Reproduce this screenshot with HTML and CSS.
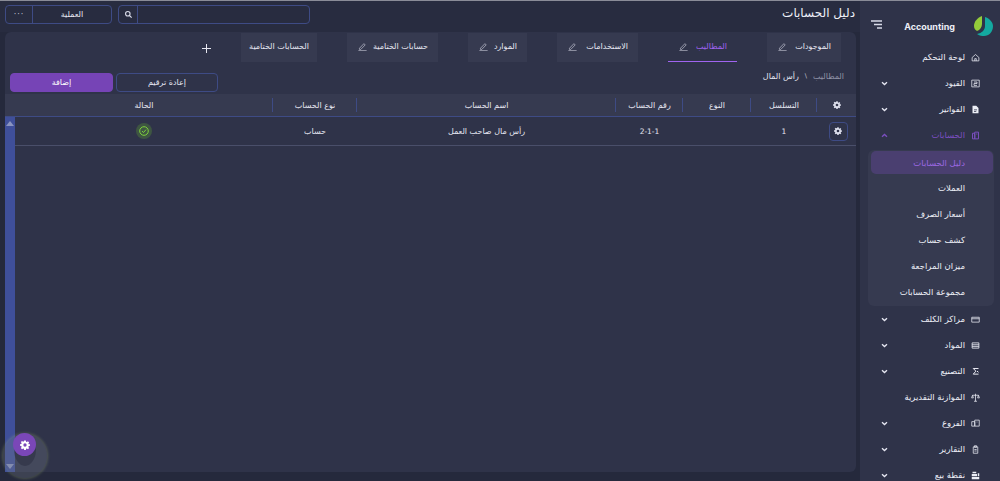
FILE: index.html
```html
<!DOCTYPE html>
<html lang="ar" dir="rtl">
<head>
<meta charset="utf-8">
<title>دليل الحسابات</title>
<link rel="stylesheet" href="styles.css">
</head>
<body>
<svg class="defs" width="0" height="0" aria-hidden="true">
  <symbol id="gear" viewBox="0 0 24 24"><path fill="currentColor" fill-rule="evenodd" d="M10 1h4l.6 3.1 1.9.8 2.6-1.800 2.800 2.800-1.800 2.600.8 1.900L24 10v4l-3.100.6-.8 1.900 1.800 2.600-2.800 2.800-2.600-1.800-1.900.8L14 24h-4l-.6-3.100-1.900-.8-2.600 1.800-2.800-2.800 1.800-2.600-.8-1.900L0 14v-4l3.100-.6.8-1.900-1.800-2.600 2.800-2.800 2.600 1.800 1.900-.8zM12 8a4 4 0 1 0 0 8 4 4 0 0 0 0-8z"/></symbol>
  <symbol id="pen" viewBox="0 0 12 12"><path fill="none" stroke="currentColor" stroke-width=".9" d="M2 8.300 7.900 2.200l1.700 1.700-5.900 6H2zM.5 11.500h11"/></symbol>
  <symbol id="chev" viewBox="0 0 8 6"><path fill="none" stroke="currentColor" stroke-width="1.600" d="M1 1.500 4 4.300l3-2.800"/></symbol>
</svg>
<div class="app">
  <aside class="side">
    <div class="brand">
      <svg class="logo" width="20" height="20" viewBox="0 0 20 20"><path fill="#94cc3a" d="M8 0C3 2 0 6 0 10c0 2 1 4 3 5 3-1 5-4 5-7z"/><path fill="#14a9a0" d="M11 1v9c0 4-3 7-8 8 3 2 5 2 7 2 5 0 9-4 9-10 0-4-4-8-8-9z"/></svg>
      <span class="brand-name">Accounting</span>
      <svg class="burger" width="11" height="9" viewBox="0 0 11 9"><path stroke="#d8dae8" stroke-width="1.400" d="M0 1h11M3 4.500h8M6 8h5"/></svg>
    </div>
    <nav class="nav">
      <div class="item"><svg class="ic" viewBox="0 0 12 12"><path fill="none" stroke="currentColor" d="M1.500 6 6 2l4.500 4v4.500h-9zM5 10.500V7.500h2v3"/></svg><span>لوحة التحكم</span></div>
      <div class="item"><svg class="ic" viewBox="0 0 12 12"><path fill="none" stroke="currentColor" d="M1 1.500h10v9H1zM4 4h4v2H4v2.500h4"/></svg><span>القيود</span><svg class="chev"><use href="#chev"/></svg></div>
      <div class="item"><svg class="ic" viewBox="0 0 12 12"><path fill="currentColor" d="M2 1h5l3 3v7H2zm2 5v1h4V6zm0 2v1h3V8z"/></svg><span>الفواتير</span><svg class="chev"><use href="#chev"/></svg></div>
      <div class="item open"><svg class="ic" viewBox="0 0 12 12"><path fill="none" stroke="currentColor" stroke-width="1.300" d="M2 3h3v7.500H2zM5 1.500h5v9H5zM7 4h1.500"/></svg><span>الحسابات</span><svg class="chev up"><use href="#chev"/></svg></div>
      <div class="sub">
        <a class="sub-item active">دليل الحسابات</a>
        <a class="sub-item">العملات</a>
        <a class="sub-item">أسعار الصرف</a>
        <a class="sub-item">كشف حساب</a>
        <a class="sub-item">ميزان المراجعة</a>
        <a class="sub-item">مجموعة الحسابات</a>
      </div>
      <div class="item"><svg class="ic" viewBox="0 0 12 12"><path fill="none" stroke="currentColor" d="M1 3h10v6.500H1zM1 5h10"/></svg><span>مراكز الكلف</span><svg class="chev"><use href="#chev"/></svg></div>
      <div class="item"><svg class="ic" viewBox="0 0 12 12"><path fill="none" stroke="currentColor" stroke-width="1.100" d="M1.500 2.500h9v7h-9zM1.500 5h9M1.500 7.200h9"/></svg><span>المواد</span><svg class="chev"><use href="#chev"/></svg></div>
      <div class="item"><svg class="ic" viewBox="0 0 12 12"><path fill="none" stroke="currentColor" stroke-width="1.300" d="M10 2H3l3.500 3.500L3 9.500h7M8 5.500 10 7"/></svg><span>التصنيع</span><svg class="chev"><use href="#chev"/></svg></div>
      <div class="item"><svg class="ic" viewBox="0 0 12 12"><path fill="none" stroke="currentColor" d="M6 1v10M4 11h4M2 3h8M2 3 .8 6.500h2.400zM10 3 8.800 6.500h2.400z"/></svg><span>الموازنة التقديرية</span></div>
      <div class="item"><svg class="ic" viewBox="0 0 12 12"><path fill="none" stroke="currentColor" d="M1 3.500h4v6H1zM5 1.500h6v8H5zM7.500 4h1"/></svg><span>الفروع</span><svg class="chev"><use href="#chev"/></svg></div>
      <div class="item"><svg class="ic" viewBox="0 0 12 12"><path fill="none" stroke="currentColor" d="M3 2.500h6v8.500H3zM4.500 1h3v2h-3zM4.500 6h3M4.500 8h3"/></svg><span>التقارير</span><svg class="chev"><use href="#chev"/></svg></div>
      <div class="item"><svg class="ic" viewBox="0 0 12 12"><path fill="currentColor" d="M2 1h5v2H2zM1 4h7v3H1zM1 8h10v3H1zM9 3h2v4H9z"/></svg><span>نقطة بيع</span><svg class="chev"><use href="#chev"/></svg></div>
    </nav>
  </aside>

  <main class="main">
    <header class="top">
      <h1 class="title">دليل الحسابات</h1>
      <div class="top-tools">
        <div class="field search">
          <span class="field-text"></span>
          <span class="field-cap"><svg width="7" height="7" viewBox="0 0 10 10"><path fill="none" stroke="#d8dae8" stroke-width="1.600" d="M4 .8a3.200 3.200 0 1 0 0 6.400A3.200 3.200 0 0 0 4 .8zM6.400 6.400 9.500 9.500"/></svg></span>
        </div>
        <div class="field pick">
          <span class="field-text">العملية</span>
          <span class="field-cap dots">···</span>
        </div>
      </div>
    </header>

    <section class="card">
      <div class="tabs">
        <div class="tab">الموجودات<svg class="pen"><use href="#pen"/></svg></div>
        <div class="tab active">المطاليب<svg class="pen"><use href="#pen"/></svg></div>
        <div class="tab">الاستخدامات<svg class="pen"><use href="#pen"/></svg></div>
        <div class="tab">الموارد<svg class="pen"><use href="#pen"/></svg></div>
        <div class="tab">حسابات الختامية<svg class="pen"><use href="#pen"/></svg></div>
        <div class="tab">الحسابات الختامية</div>
        <svg class="plus" width="9" height="9" viewBox="0 0 9 9"><path stroke="#e6e7f0" d="M4.500 0v9M0 4.500h9"/></svg>
      </div>

      <div class="bar">
        <div class="crumbs"><span class="crumb-dim">المطاليب</span><span class="sep">\</span><span>رأس المال</span></div>
        <div class="actions">
          <button class="btn">إعادة ترقيم</button>
          <button class="btn primary">إضافة</button>
        </div>
      </div>

      <div class="grid-wrap">
        <div class="table">
          <div class="row head">
            <div class="cell"><svg class="gear"><use href="#gear"/></svg></div>
            <div class="cell">التسلسل</div>
            <div class="cell">النوع</div>
            <div class="cell">رقم الحساب</div>
            <div class="cell">اسم الحساب</div>
            <div class="cell">نوع الحساب</div>
            <div class="cell">الحالة</div>
          </div>
          <div class="row body">
            <div class="cell"><span class="gear-btn"><svg class="gear"><use href="#gear"/></svg></span></div>
            <div class="cell num">1</div>
            <div class="cell"></div>
            <div class="cell num" dir="ltr">2-1-1</div>
            <div class="cell">رأس مال صاحب العمل</div>
            <div class="cell">حساب</div>
            <div class="cell"><span class="status"><svg width="10" height="10" viewBox="0 0 10 10"><circle cx="5" cy="5" r="4.300" fill="none" stroke="#7fd23c"/><path fill="none" stroke="#7fd23c" d="M3 5.100 4.500 6.500 7 3.600"/></svg></span></div>
          </div>
        </div>
        <div class="scroll"><span class="arrow-up"></span><span class="arrow-down"></span></div>
      </div>
    </section>
  </main>
</div>

<div class="halo"><div class="halo-pin"></div></div>
<div class="fab"><svg class="fab-gear"><use href="#gear"/></svg></div>
</body>
</html>
```
FILE: styles.css
```css
* { box-sizing: border-box; }
html, body { margin: 0; height: 100%; }
body {
  background: #25293c;
  color: #e6e7f2;
  font-family: "DejaVu Sans", "Noto Sans", sans-serif;
  font-size: 8px;
  overflow: hidden;
  border-top: 1px solid #8a8c98;
}
.defs { position: absolute; }
.app { display: flex; height: 480px; }

/* sidebar */
.side { width: 140px; flex: none; background: #2f3349; padding: 0 6px 0 8px; overflow: hidden; font-size: 8.5px; }
.brand { display: flex; align-items: center; height: 43px; padding: 7px 0 0 3px; }
.logo { flex: none; margin-left: 19px; }
.brand-name { font: 700 9px Inter, "Liberation Sans", sans-serif; color: #eceef6; flex: 1; }
.burger { flex: none; margin-bottom: 3px; }
.nav { display: flex; flex-direction: column; }
.item { display: flex; align-items: center; height: 26px; padding-right: 14px; color: #eceef6; gap: 6px; flex: none; }
.item .ic { width: 9px; height: 9px; flex: none; }
.item.open { color: #7b4fc0; }
.chev { width: 7px; height: 5px; margin-right: auto; margin-left: 13px; color: #e6e7f2; flex: none; }
.open .chev { color: #7b4fc0; }
.chev.up { transform: rotate(180deg); }
.sub { display: flex; flex-direction: column; background: #363a50; border-radius: 6px; padding: 0 1px 1px 3px; margin: 2px 0 0; flex: none; }
.sub-item { display: flex; align-items: center; height: 26px; padding-right: 28px; color: #eceef6; border-radius: 5px; }
.sub-item.active { height: 23px; margin: 1px 0; background: #4a3f70; color: #9a68e0; }

/* top */
.main { flex: 1; min-width: 0; display: flex; flex-direction: column; padding: 0 4px 9px 5px; }
.top { display: flex; justify-content: space-between; align-items: center; height: 31px; background: #282c40; margin: 0 -4px 0 -5px; padding: 0 5px 5px 5px; flex: none; }
.title { font-size: 12px; font-weight: 400; margin: 0 0 2px; color: #eef0f8; }
.top-tools { display: flex; gap: 6px; }
.field { display: flex; height: 19px; border: 1px solid #3e4b85; border-radius: 4px; }
.search { width: 192px; }
.pick { width: 107px; }
.field-text { flex: 1; display: flex; align-items: center; justify-content: center; }
.field-cap { display: flex; align-items: center; justify-content: center; border-right: 1px solid #3e4b85; flex: none; }
.search .field-cap { width: 19px; }
.pick .field-cap { width: 27px; }
.dots { letter-spacing: 1px; color: #c5c7d6; }

/* card */
.card { flex: 1; background: #2f3349; border-radius: 6px; display: flex; flex-direction: column; min-height: 0; }
.tabs { display: flex; gap: 30px; padding: 1px 15px 0 0; height: 31px; align-items: stretch; flex: none; }
.tab { display: flex; align-items: center; justify-content: space-between; padding: 0 10px 2px 11px; background: #363a50; color: #e6e7f2; height: 29px; flex: none; }
.tab:nth-child(1) { width: 74px; }
.tab:nth-child(2) { width: 69px; }
.tab:nth-child(3) { width: 81px; }
.tab:nth-child(4) { width: 59px; }
.tab:nth-child(5) { width: 91px; }
.tab:nth-child(6) { width: 76px; padding: 0 0 2px; justify-content: center; }
.tab.active { background: none; color: #a064f0; border-bottom: 1px solid #a064f0; }
.pen { width: 9px; height: 9px; flex: none; color: #c8cad8; }
.plus { align-self: center; }
.bar { display: flex; justify-content: space-between; height: 31px; padding: 0 12px 2px 5px; flex: none; }
.crumbs { display: flex; gap: 6px; align-items: center; padding-bottom: 3px; }
.crumb-dim { color: #8f92a6; }
.sep { font-size: 6.500px; color: #c5c7d6; }
.actions { display: flex; gap: 3px; align-items: flex-end; }
.btn { width: 102px; height: 19px; font: inherit; color: #e6e7f2; background: none; border: 1px solid #3e4b85; border-radius: 4px; padding: 0; }
.btn.primary { width: 103px; background: #7644b6; border-color: #7644b6; color: #fff; }

/* table */
.grid-wrap { flex: 1; display: flex; min-height: 0; }
.table { flex: 1; min-width: 0; }
.row { display: grid; grid-template-columns: 39px 66px 68px 67px 259px 84px 1fr; }
.head { height: 23px; background: #363a50; border-bottom: 1px solid #3e4b85; margin-left: -10px; padding-left: 10px; }
.head .cell { position: relative; }
.head .cell + .cell::before { content: ""; position: absolute; right: 0; top: 4px; bottom: 4px; width: 1px; background: #3e4b85; }
.body { height: 29px; border-bottom: 1px solid #4a4f6a; }
.cell { display: flex; align-items: center; justify-content: center; color: #e6e7f2; min-width: 0; }
.num { font-size: 7.500px; }
.gear { width: 8px; height: 8px; color: #dfe1ee; }
.gear-btn { display: flex; width: 19px; height: 19px; align-items: center; justify-content: center; border: 1px solid #3e4b85; border-radius: 4px; margin-left: 3px; }
.status { display: flex; width: 16px; height: 16px; align-items: center; justify-content: center; border-radius: 50%; background: #3e5642; }
.scroll { width: 10px; flex: none; background: #3f4f9a; margin-top: 23px; position: relative; }
.arrow-up, .arrow-down { position: absolute; right: 1px; width: 0; height: 0; border-left: 4px solid transparent; border-right: 4px solid transparent; }
.arrow-up { top: 4px; border-bottom: 5px solid #8a94c0; }
.arrow-down { bottom: 3px; border-top: 5px solid #8a94c0; }

/* floating */
.fab { position: absolute; left: 13px; top: 433px; width: 23px; height: 23px; border-radius: 50%; background: #7a47b8; display: flex; align-items: center; justify-content: center; }
.fab-gear { width: 10px; height: 10px; color: #fff; }
.halo { position: absolute; left: 3px; top: 434px; width: 44px; height: 44px; border-radius: 50%; background: rgba(120,125,135,.3); box-shadow: 0 0 3px 1px rgba(170,190,120,.3); display: flex; justify-content: center; }
.halo-pin { width: 22px; height: 28px; margin-top: 4px; background: rgba(37,41,60,.45); border-radius: 50% 50% 50% 50% / 40% 40% 60% 60%; }
```
